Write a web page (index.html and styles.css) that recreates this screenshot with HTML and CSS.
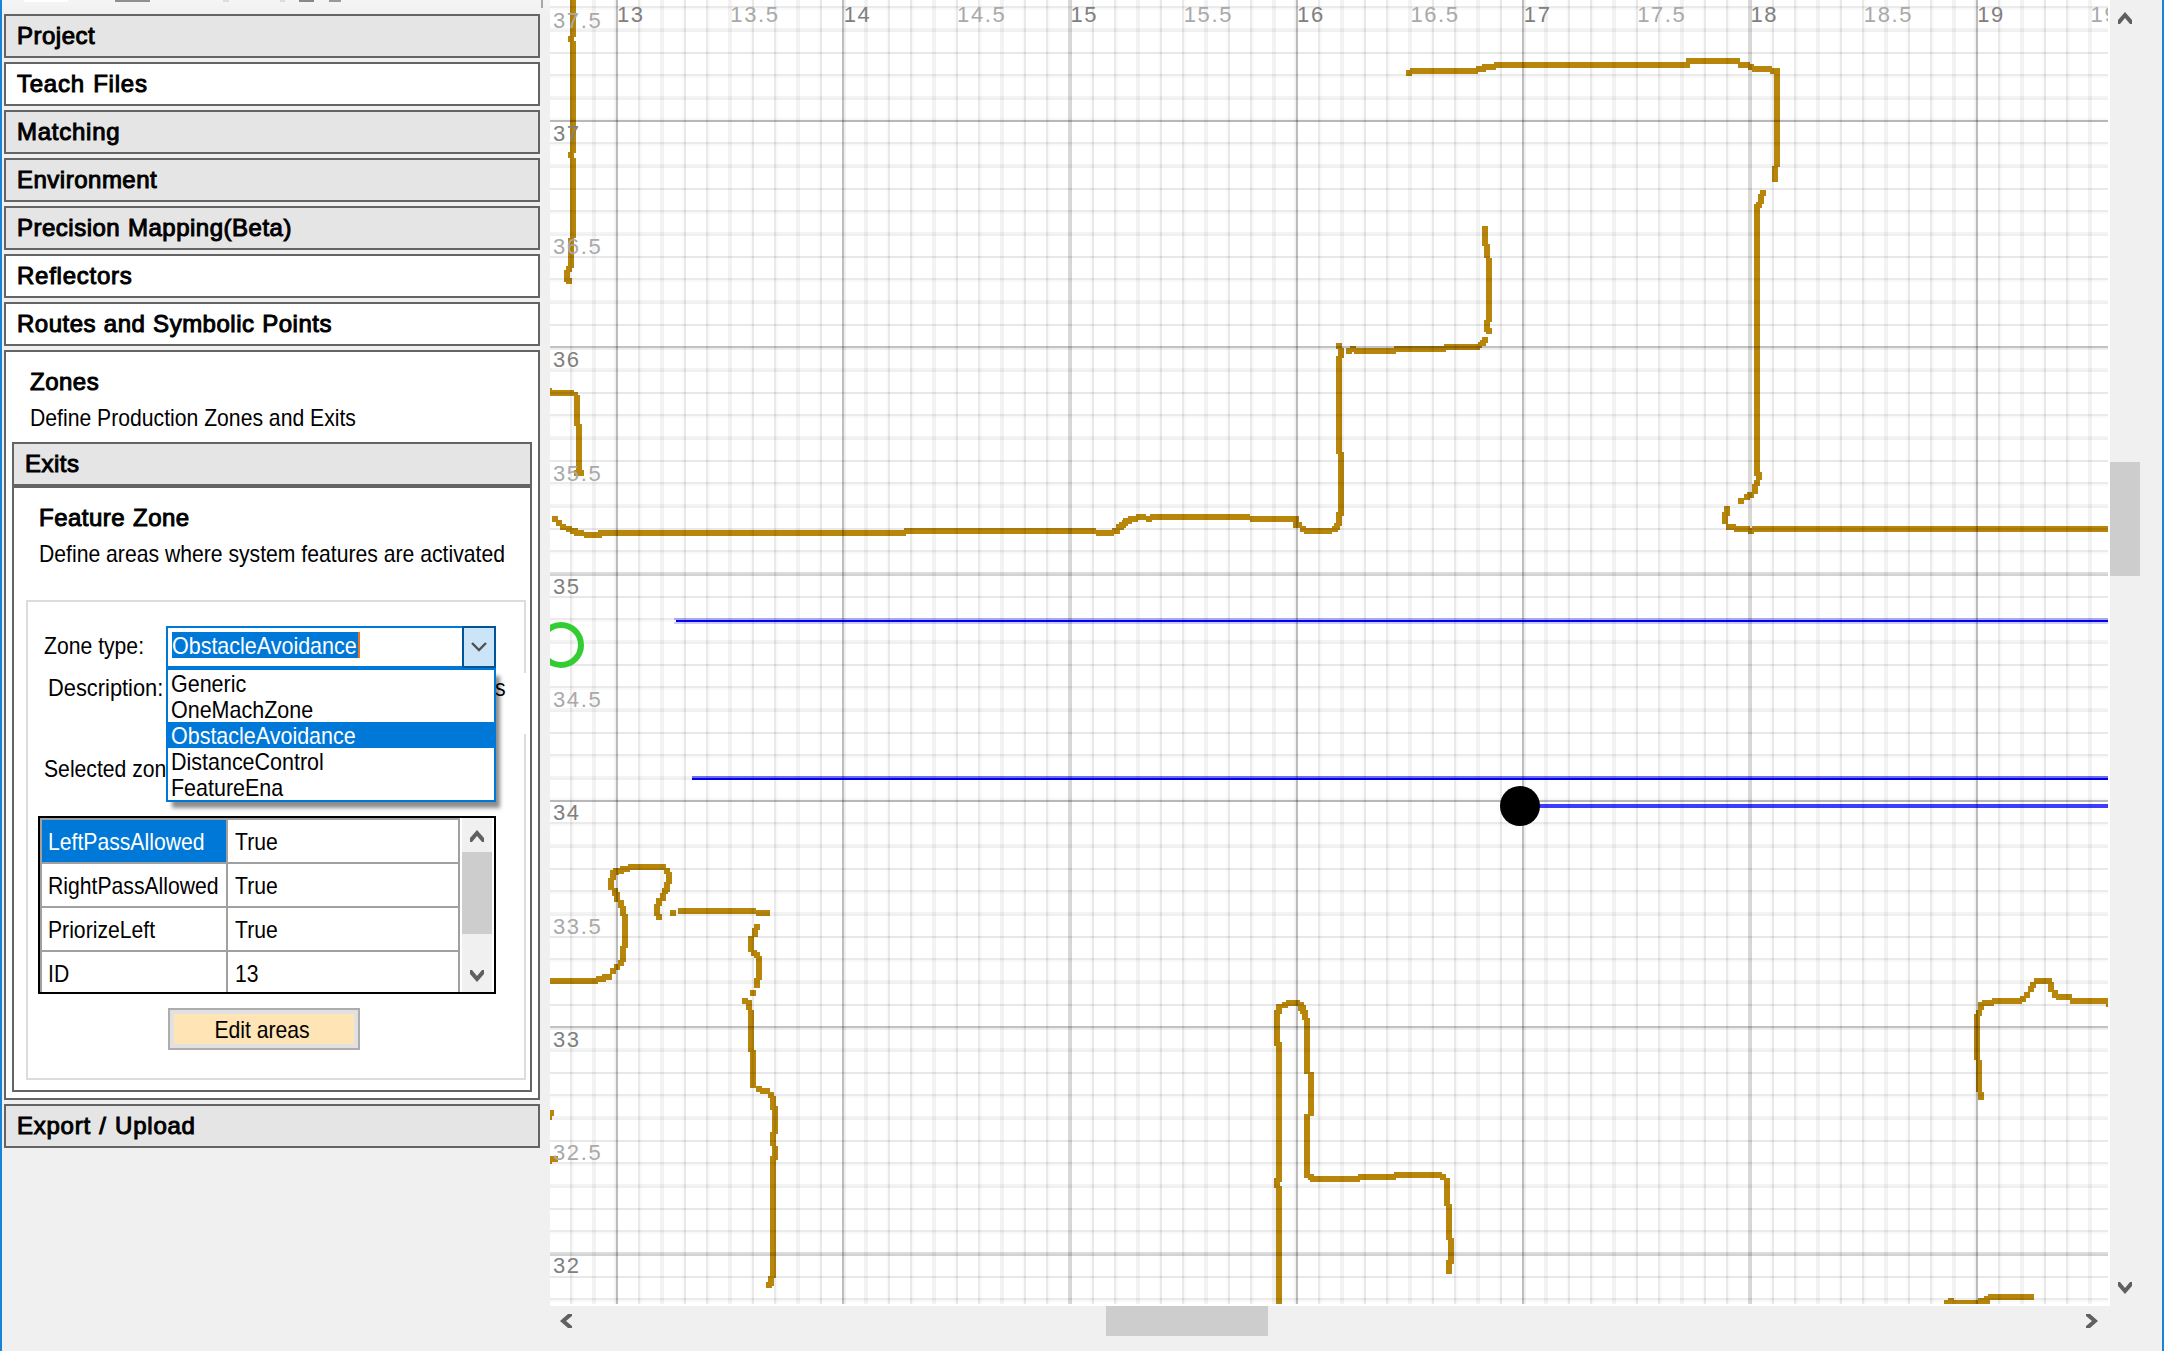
FILE: index.html
```html
<!DOCTYPE html>
<html lang="en">
<head>
<meta charset="utf-8">
<title>Zones</title>
<link rel="stylesheet" href="styles.css">
</head>
<body>
<aside class="sidebar">
  <div class="toolbar-edge"></div>
  <nav class="sections">
    <div class="section shaded"><span class="strong">Project</span></div>
    <div class="section"><span class="strong wide">Teach Files</span></div>
    <div class="section shaded"><span class="strong wide">Matching</span></div>
    <div class="section shaded"><span class="strong">Environment</span></div>
    <div class="section shaded"><span class="strong">Precision Mapping(Beta)</span></div>
    <div class="section"><span class="strong wide">Reflectors</span></div>
    <div class="section"><span class="strong">Routes and Symbolic Points</span></div>
    <div class="zones">
      <div class="zones-head">
        <div class="strong">Zones</div>
        <div class="text sub">Define Production Zones and Exits</div>
      </div>
      <div class="section exits shaded"><span class="strong">Exits</span></div>
      <div class="feature">
        <div class="feature-head">
          <div class="strong">Feature Zone</div>
          <div class="text sub">Define areas where system features are activated</div>
        </div>
        <div class="group">
          <div class="row">
            <span class="text label">Zone type:</span>
            <div class="combo">
              <span class="combo-value"><span class="text">ObstacleAvoidance</span></span>
              <span class="combo-button"><svg width="16" height="12" viewBox="0 0 16 12"><path d="M1 2L8 9L15 2" fill="none" stroke="#505050" stroke-width="2.4"/></svg></span>
              <ul class="options">
                <li><span class="text">Generic</span></li>
                <li><span class="text">OneMachZone</span></li>
                <li class="active"><span class="text">ObstacleAvoidance</span></li>
                <li><span class="text">DistanceControl</span></li>
                <li><span class="text">FeatureEna</span></li>
              </ul>
            </div>
          </div>
          <div class="row description"><span class="text caption">Description:</span><span class="text">s</span></div>
          <div class="row selected"><span class="text">Selected zon</span></div>
          <div class="props">
            <div class="cells">
              <div class="cell key active"><span class="text">LeftPassAllowed</span></div><div class="cell"><span class="text">True</span></div>
              <div class="cell key"><span class="text">RightPassAllowed</span></div><div class="cell"><span class="text">True</span></div>
              <div class="cell key"><span class="text">PriorizeLeft</span></div><div class="cell"><span class="text">True</span></div>
              <div class="cell key"><span class="text">ID</span></div><div class="cell"><span class="text">13</span></div>
            </div>
            <div class="props-scroll">
              <svg width="14" height="12" viewBox="0 0 14 12"><path d="M0 8L7 0L14 8V12H12L7 6L2 12H0Z" fill="#606060"/></svg>
              <div class="props-thumb"></div>
              <svg width="14" height="12" viewBox="0 0 14 12"><path d="M0 4L7 12L14 4V0H12L7 6L2 0H0Z" fill="#606060"/></svg>
            </div>
          </div>
          <div class="edit"><span>Edit areas</span></div>
        </div>
      </div>
    </div>
    <div class="section shaded"><span class="strong wide">Export / Upload</span></div>
  </nav>
</aside>
<main class="viewer">
  <svg class="map" width="1560" height="1306" viewBox="550 0 1560 1306">
    <defs><clipPath id="plot"><rect x="550" y="0" width="1558" height="1304"/></clipPath></defs>
    <g clip-path="url(#plot)" shape-rendering="crispEdges">
      <g class="walls">
        <path d="M573 0v37M571 36v6M573 41v112M571 152v6M573 158v80M571 238v30M569 266v6M567 270v12M569 278v6"/>
        <path d="M550 391h2M550 393h24M574 395h4M577 395v31M579 424v50M574 473h10"/>
        <path d="M552 519h6M556 523h6M560 527h6M566 529h6M570 531h8M574 533h10M584 535h18M598 533h308M904 531h192M1096 533h18M1112 531h8M1116 527h8M1119 525h7M1122 523h6M1123 521h9M1128 519h10M1136 517h10M1146 519h6M1150 517h100M1250 519h46M1296 516v12M1298 525h4M1300 529h6M1304 531h28M1332 529h6M1337 523v7M1339 512v14M1341 452v64M1339 356v98M1341 348v10M1336 346h6"/>
        <path d="M1346 351h6M1350 349h6M1354 351h42M1394 349h52M1444 347h36M1478 345h4M1480 343h6M1482 340h6M1489 328v6M1487 320v12M1489 258v64M1487 244v14M1485 226v20"/>
        <path d="M1406 73h6M1410 71h68M1476 69h10M1482 67h14M1494 65h196M1686 61h54M1738 65h12M1748 67h6M1752 69h20M1770 71h10M1777 70v97M1775 166v16"/>
        <path d="M1763 190v6M1761 194v10M1759 202v6M1757 204v272M1759 472v8M1757 480v6M1755 484v10M1747 495h7M1744 497h6M1738 501h6"/>
        <path d="M1727 506v10M1725 512v12M1726 527h10M1734 529h16M1748 531h6M1752 529h356"/>
        <path d="M550 981h48M596 979h10M602 977h10M613 968v6M617 964v6M621 960v6M623 946v16M625 914v34M623 906v10M621 900v8M617 892v10M615 888v8M611 878v12M613 870v10M616 868v7M618 871h6M620 869h10M628 867h38M667 868v6M669 872v12M667 882v10M665 888v6M663 893v8M659 898v8M657 904v12M659 914v6"/>
        <path d="M670 913h6M678 911h78M756 913h14M757 924v6M755 928v9M751 936v16M754 950v6M757 952v6M759 956v24M757 978v10M750 993h6M742 1001h6M749 1000v10M751 1010v42M753 1050v38M756 1089h6M760 1091h10M768 1095h6M773 1096v14M775 1106v28M773 1132v14M775 1146v14M773 1156v122M771 1276v10M769 1282v6M550 1113h4M550 1117h2M550 1159h8M550 1161h2"/>
        <path d="M1279 1186v118M1277 1178v10M1279 1042v140M1277 1010v36M1279 1004v10M1282 1005h6M1286 1003h14M1301 1002v9M1303 1005v9M1305 1010v10M1307 1018v56M1311 1072v44M1307 1114v64M1308 1177h6M1310 1179h50M1358 1177h38M1394 1175h48M1440 1177h6M1447 1178v28M1449 1204v36M1451 1238v26M1449 1260v14"/>
        <path d="M1981 1092v8M1979 1060v32M1977 1014v46M1979 1010v6M1981 1002v8M1982 1003h12M1992 1001h30M2020 999h6M2027 992v6M2031 986v6M2033 982v6M2034 981h18M2051 982v10M2055 990v8M2056 997h16M2070 1001h38M2106 1004h2M1944 1303h36M1948 1301h6M1978 1301h12M1984 1299h6M1988 1297h46"/>
      </g>
      <g class="routes">
        <rect x="674" y="618" width="1434" height="2" opacity=".28"/><rect x="674" y="622" width="1434" height="2" opacity=".2"/><rect x="676" y="620" width="1432" height="2"/>
        <rect x="692" y="776" width="1416" height="2" opacity=".55"/><rect x="692" y="778" width="1416" height="2"/>
        <rect x="1530" y="804" width="578" height="4" opacity=".76"/>
      </g>
      <g id="grid"></g>
    </g>
    <g clip-path="url(#plot)">
      <circle cx="561" cy="645" r="20" fill="none" stroke="#32cd32" stroke-width="6"/>
      <circle cx="1520" cy="806" r="20"/>
      <g id="labels"></g>
    </g>
  </svg>
  <div class="vscroll">
    <svg width="14" height="12" viewBox="0 0 14 12"><path d="M0 8L7 0L14 8V12H12L7 6L2 12H0Z" fill="#606060"/></svg>
    <div class="vthumb"></div>
    <svg class="end" width="14" height="12" viewBox="0 0 14 12"><path d="M0 4L7 12L14 4V0H12L7 6L2 0H0Z" fill="#606060"/></svg>
  </div>
  <div class="hscroll">
    <svg width="12" height="14" viewBox="0 0 12 14"><path d="M8 0L0 7L8 14H12V12L6 7L12 2V0Z" fill="#606060"/></svg>
    <div class="hthumb"></div>
    <svg class="end" width="12" height="14" viewBox="0 0 12 14"><path d="M4 0L12 7L4 14H0V12L6 7L0 2V0Z" fill="#606060"/></svg>
  </div>
</main>
<script src="map.js"></script>
</body>
</html>
```
FILE: map.js
```js
// Draws the metre grid and its axis labels. Grid cells are 2px device units.
const NS = 'http://www.w3.org/2000/svg';
const grid = document.getElementById('grid');
const labels = document.getElementById('labels');
const STEP = 11.3333;

function rect(x, y, w, h, alpha) {
  if (alpha < 0.012) return;
  const r = document.createElementNS(NS, 'rect');
  r.setAttribute('x', x);
  r.setAttribute('y', y);
  r.setAttribute('width', w);
  r.setAttribute('height', h);
  r.setAttribute('fill-opacity', alpha.toFixed(3));
  grid.appendChild(r);
}

// Spread one line over the two cells that it touches.
function line(center, alpha, vertical) {
  const start = center - 0.5;
  const cell = Math.floor(start);
  const part = start - cell;
  [[cell, 1 - part], [cell + 1, part]].forEach(([c, weight]) => {
    if (vertical) rect(c * 2, 0, 2, 1304, alpha * weight);
    else rect(550, c * 2, 1558, 2, alpha * weight);
  });
}

for (let k = -2; k <= 66; k++) line(308.35 + k * STEP, k % 10 ? 0.1 : 0.31, true);
for (let k = -5; k <= 52; k++) line(60.4 + k * STEP, k % 10 ? 0.1 : 0.31, false);

function label(x, y, value) {
  const t = document.createElementNS(NS, 'text');
  t.setAttribute('x', x);
  t.setAttribute('y', y);
  t.setAttribute('class', value % 1 ? 'tick half' : 'tick');
  t.textContent = value;
  labels.appendChild(t);
}

for (let i = 0; i < 14; i++) label(617 + i * 113.35, 22, 13 + i / 2);
for (let i = 0; i < 12; i++) label(553, 27.5 + i * 113.25, 37.5 - i / 2);
```
FILE: styles.css
```css
* { box-sizing: border-box; }
body {
  margin: 0;
  width: 2164px;
  height: 1351px;
  display: flex;
  overflow: hidden;
  background: #f0f0f0;
  border: solid #1883d7;
  border-width: 0 2px;
  font: 24px/28px "Liberation Sans", Arial, sans-serif;
  color: #000;
  white-space: nowrap;
}
.sidebar { width: 548px; flex: none; }
.toolbar-edge {
  height: 14px;
  background:
    linear-gradient(#909090, #909090) 113px 0 / 35px 2px no-repeat,
    linear-gradient(#fff, #fff) 22px 0 / 44px 2px no-repeat,
    linear-gradient(#dcdcdc, #dcdcdc) 221px 0 / 6px 2px no-repeat,
    linear-gradient(#dcdcdc, #dcdcdc) 278px 0 / 5px 2px no-repeat,
    linear-gradient(#888, #888) 297px 0 / 15px 2px no-repeat,
    linear-gradient(#999, #999) 327px 0 / 12px 2px no-repeat,
    linear-gradient(#a8a8a8, #a8a8a8) 539px 0 / 2px 8px no-repeat,
    linear-gradient(#f5f5f5, #f0f0f0);
}
.sections { margin-left: 2px; width: 536px; display: flex; flex-direction: column; gap: 4px; }
.section {
  height: 44px;
  flex: none;
  display: flex;
  align-items: center;
  padding-left: 11px;
  border: 2px solid #646464;
  background: #fff;
}
.shaded { background: #e5e5e5; }
.strong { letter-spacing: .5px; word-spacing: .6px; -webkit-text-stroke: 1px #000; }
.wide { letter-spacing: .75px; word-spacing: 1px; }
.text { display: inline-block; transform: scaleX(.882); transform-origin: 0 50%; }
.zones { height: 750px; border: 2px solid #646464; background: #fff; padding: 16px 6px 0; }
.zones-head { padding-left: 18px; }
.sub { display: block; margin-top: 8px; }
.exits { margin-top: 10px; padding-left: 11px; }
.feature { height: 606px; border: 2px solid #646464; padding: 16px 4px 0 12px; }
.feature-head { padding-left: 13px; }
.feature-head .sub { margin-top: 8px; }
.group { position: relative; margin-top: 32px; height: 480px; border: 2px solid #dcdcdc; padding-top: 24px; }
.group::after { content: ""; position: absolute; right: -2px; top: 71px; width: 2px; height: 61px; background: #fff; }
.row { display: flex; align-items: center; }
.label { width: 121px; margin-left: 16px; margin-right: 1px; margin-top: -2px; }
.combo { position: relative; width: 330px; height: 42px; border: 2px solid #0078d7; display: flex; align-items: flex-start; justify-content: space-between; z-index: 2; background: #fff; }
.combo-value { margin: 4px 0 0 4px; width: 188px; height: 26px; line-height: 27px; background: #0078d7; color: #fff; border-right: 2px solid #e87722; }
.combo .text { transform: scaleX(.895); }
.combo-button { width: 34px; height: 42px; margin: -2px; border: 2px solid #005499; background: #cce4f7; display: flex; align-items: center; justify-content: center; }
.options {
  position: absolute;
  left: -2px;
  top: 40px;
  width: 330px;
  height: 134px;
  margin: 0;
  padding: 0;
  list-style: none;
  background: #fff;
  border: 2px solid #0078d7;
  box-shadow: 5px 7px 4px -1px rgba(0, 0, 0, .45);
}
.options li { height: 26px; line-height: 28px; padding-left: 3px; }
.options .active { background: #0078d7; color: #fff; }
.description { margin: 6px 0 0 20px; }
.description { position: relative; z-index: 1; }
.caption { width: 447px; transform: scaleX(.91); }
.selected { margin: 53px 0 0 16px; }
.props { width: 458px; height: 178px; margin: 33px 0 0 10px; border: 2px solid #000; display: flex; background: #fff; }
.cells { width: 420px; height: 174px; overflow: hidden; display: grid; grid-template-columns: 186px 230px; grid-auto-rows: 44px; border-left: 2px solid #a0a0a0; border-right: 2px solid #a0a0a0; }
.cell { border-top: 2px solid #a0a0a0; padding: 8px 0 0 7px; }
.cell.key { border-right: 2px solid #a0a0a0; padding-left: 6px; }
.cell.active { background-color: #0078d7; color: #fff; background-clip: padding-box; }
.props-scroll { width: 30px; margin-left: 2px; background: #f0f0f0; display: flex; flex-direction: column; align-items: center; padding-top: 12px; }
.props-thumb { width: 30px; height: 82px; margin: 10px 0 36px; flex: none; background: #cdcdcd; }
.props-scroll svg { flex: none; }
.edit { width: 192px; height: 42px; margin: 14px 0 0 140px; border: 2px solid #adadad; background: #ffe4b5; box-shadow: inset 0 0 0 4px #e1e1e1; display: flex; align-items: center; justify-content: center; padding: 2px 3px 0 0; }
.edit span { transform: scaleX(.882); }
.viewer { display: grid; grid-template-columns: 1560px 30px; grid-template-rows: 1306px 30px; }
.map { display: block; background: #fff; }
.walls { fill: none; stroke: #b8860b; stroke-width: 6; }
.routes { fill: #00f; }
.tick { font-size: 22px; letter-spacing: 1.6px; fill: #808080; }
.half { fill: #a9a9a9; }
.vscroll { display: flex; flex-direction: column; align-items: center; padding: 12px 0; }
.vthumb { width: 30px; height: 114px; margin-top: 438px; background: #cdcdcd; }
.hscroll { display: flex; align-items: center; padding: 0 12px 0 10px; }
.hthumb { width: 162px; height: 30px; margin-left: 534px; background: #cdcdcd; }
.end { margin-top: auto; }
.hscroll .end { margin: 0 0 0 auto; }
```
